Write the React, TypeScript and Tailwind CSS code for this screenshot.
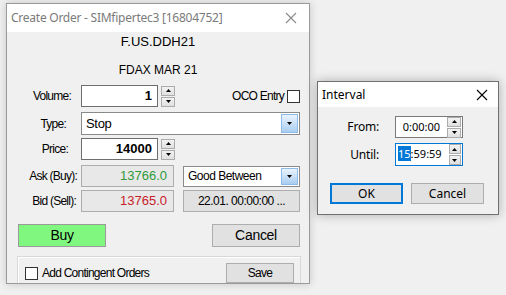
const narrow = "font-['Liberation_Sans',Arial,sans-serif] tracking-[-0.75px]";
const arial = "font-['Liberation_Sans',Arial,sans-serif]";
const segoe = "font-['Noto_Sans','Open_Sans',sans-serif]";

const Tri = ({ up }: { up?: boolean }) => (
  <svg width="5" height="3" viewBox="0 0 5 3" className="block">
    <path d={up ? "M0 3 L2.5 0 L5 3 Z" : "M0 0 L5 0 L2.5 3 Z"} fill="#000" />
  </svg>
);

const Spinner = ({ className = "" }: { className?: string }) => (
  <div className={`flex flex-col gap-[1px] w-[14px] ${className}`}>
    <div className="h-[10px] border border-[#acacac] bg-gradient-to-b from-[#f2f2f2] to-[#e0e0e0] flex items-center justify-center">
      <Tri up />
    </div>
    <div className="h-[10px] border border-[#acacac] bg-gradient-to-b from-[#f2f2f2] to-[#e0e0e0] flex items-center justify-center">
      <Tri />
    </div>
  </div>
);

const DropBtn = () => (
  <div className="w-[17px] h-full border border-[#8fbbe9] bg-gradient-to-b from-[#eaf3fc] to-[#a9cdf1] flex items-center justify-center">
    <Tri />
  </div>
);

const CloseX = ({ color }: { color: string }) => (
  <svg width="12" height="12" viewBox="0 0 12 12">
    <path d="M1 1 L11 11 M11 1 L1 11" stroke={color} strokeWidth="1.1" />
  </svg>
);

const CreateOrder = () => (
  <div className="absolute left-[6px] top-[3px] w-[304px] h-[281px] border border-[#9a9a9a] bg-[#f0f0f0] shadow-[0_0_8px_rgba(0,0,0,0.18)] flex flex-col">
    <div className={`h-[28px] bg-white flex items-center pl-[4px] pr-[12px] text-[12px] tracking-[-0.25px] text-[#7a7a7a] ${segoe}`}>
      <span>Create Order - SIMfipertec3 [16804752]</span>
      <span className="ml-auto">
        <CloseX color="#8a8a8a" />
      </span>
    </div>

    <div className={`text-center text-[13px] leading-[16px] text-black mt-[2px] ${arial}`}>F.US.DDH21</div>
    <div className={`text-center text-[12px] leading-[16px] text-black mt-[12px] ${arial}`}>FDAX MAR 21</div>

    <div className={`flex flex-col text-[12px] text-black pr-[9px] ${narrow}`}>
      {/* Volume */}
      <div className="flex items-center h-[22px] mt-[7px]">
        <div className="w-[70px] text-right pr-[6px]">Volume:</div>
        <div className={`ml-[4px] w-[77px] h-[22px] bg-white border border-[#6e6e6e] flex items-center justify-end pr-[5px] font-bold text-[13px] tracking-normal ${arial}`}>1</div>
        <Spinner className="ml-[3px]" />
        <div className="ml-auto flex items-center gap-[3px]">
          <span>OCO Entry</span>
          <div className="w-[13px] h-[13px] bg-white border border-[#333]" />
        </div>
      </div>

      {/* Type */}
      <div className="flex items-center h-[23px] mt-[5px]">
        <div className="w-[70px] text-right pr-[11px]">Type:</div>
        <div className="ml-[4px] flex-1 h-[23px] bg-white border border-[#8a8a8a] flex items-center p-[1px]">
          <span className="pl-[3px] text-[13px] tracking-[-0.3px]">Stop</span>
          <div className="ml-auto h-full">
            <DropBtn />
          </div>
        </div>
      </div>

      {/* Price */}
      <div className="flex items-center h-[22px] mt-[3px]">
        <div className="w-[70px] text-right pr-[9px]">Price:</div>
        <div className={`ml-[4px] w-[77px] h-[22px] bg-white border border-[#6e6e6e] flex items-center justify-end pr-[5px] font-bold text-[13px] tracking-normal ${arial}`}>14000</div>
        <Spinner className="ml-[3px]" />
      </div>

      {/* Ask */}
      <div className="flex items-center h-[22px] mt-[5px]">
        <div className="w-[70px] text-right">Ask (Buy):</div>
        <div className={`ml-[4px] w-[93px] h-[22px] bg-[#e8e8e8] border border-[#adadad] flex items-center justify-end pr-[6px] text-[13px] tracking-normal text-[#2f9a3a] ${arial}`}>13766.0</div>
        <div className="ml-[9px] flex-1 h-[21px] bg-white border border-[#8a8a8a] flex items-center p-[1px]">
          <span className="pl-[3px] text-[12px] tracking-[-0.5px]">Good Between</span>
          <div className="ml-auto h-full">
            <DropBtn />
          </div>
        </div>
      </div>

      {/* Bid */}
      <div className="flex items-center h-[22px] mt-[3px]">
        <div className="w-[70px] text-right pr-[1px]">Bid (Sell):</div>
        <div className={`ml-[4px] w-[93px] h-[22px] bg-[#e8e8e8] border border-[#adadad] flex items-center justify-end pr-[6px] text-[13px] tracking-normal text-[#c8202a] ${arial}`}>13765.0</div>
        <div className="ml-[9px] flex-1 h-[22px] bg-[#e1e1e1] border border-[#adadad] flex items-center justify-center text-[12px] tracking-[-0.5px]">
          22.01. 00:00:00 ...
        </div>
      </div>

      {/* Buy / Cancel */}
      <div className="flex items-center h-[23px] mt-[12px] pl-[11px]">
        <div className="w-[88px] h-[23px] bg-[#80f880] border border-[#9a9a9a] flex items-center justify-center text-[14px] tracking-[-0.3px]">Buy</div>
        <div className="ml-auto w-[88px] h-[23px] bg-[#e1e1e1] border border-[#adadad] flex items-center justify-center text-[14px] tracking-[-0.3px]">Cancel</div>
      </div>
    </div>

    <div className={`mt-[9px] ml-[10px] mr-[8px] flex-1 border-t border-l border-r border-[#d8d8d8] shadow-[inset_1px_1px_0_#fff] flex items-center pt-[6px] pl-[7px] pr-[6px] text-[12px] ${narrow}`}>
      <div className="w-[13px] h-[13px] bg-white border border-[#333]" />
      <span className="ml-[4px]">Add Contingent Orders</span>
      <div className="ml-auto w-[68px] h-[20px] bg-[#e1e1e1] border border-[#adadad] flex items-center justify-center">Save</div>
    </div>
  </div>
);

const Interval = () => (
  <div className={`absolute left-[317px] top-[81px] w-[182px] h-[134px] border border-[#707070] bg-[#f0f0f0] shadow-[0_0_10px_rgba(0,0,0,0.28)] flex flex-col text-[12px] text-black ${segoe}`}>
    <div className="h-[25px] bg-white flex items-center pl-[4px] pr-[10px]">
      <span>Interval</span>
      <span className="ml-auto">
        <CloseX color="#000" />
      </span>
    </div>

    <div className="flex items-center mt-[9px] h-[22px]">
      <div className="w-[61px] text-right tracking-[-0.2px]">From:</div>
      <div className="ml-[16px] w-[68px] h-[22px] bg-white border border-[#7a7a7a] flex items-center pl-[2px] pr-[1px]">
        <span className="flex-1 text-right pr-[7px] text-[11px]">0:00:00</span>
        <Spinner />
      </div>
    </div>

    <div className="flex items-center mt-[5px] h-[23px]">
      <div className="w-[61px] text-right tracking-[-0.2px]">Until:</div>
      <div className="ml-[16px] w-[68px] h-[23px] bg-white border border-[#0078d7] flex items-center pl-[2px] pr-[1px]">
        <span className="flex-1 text-right pr-[7px] text-[11px]">
          <span className="bg-[#0078d7] text-white">15</span>:59:59
        </span>
        <Spinner />
      </div>
    </div>

    <div className="flex items-center mt-[17px] pl-[12px] gap-[8px]">
      <div className="w-[73px] h-[21px] bg-[#e1e1e1] border-2 border-[#0078d7] flex items-center justify-center">OK</div>
      <div className="w-[73px] h-[21px] bg-[#e1e1e1] border border-[#adadad] flex items-center justify-center">Cancel</div>
    </div>
  </div>
);

export default function App() {
  return (
    <div className="relative w-[506px] h-[295px] bg-[#f0f0f0] overflow-hidden">
      <CreateOrder />
      <Interval />
    </div>
  );
}
